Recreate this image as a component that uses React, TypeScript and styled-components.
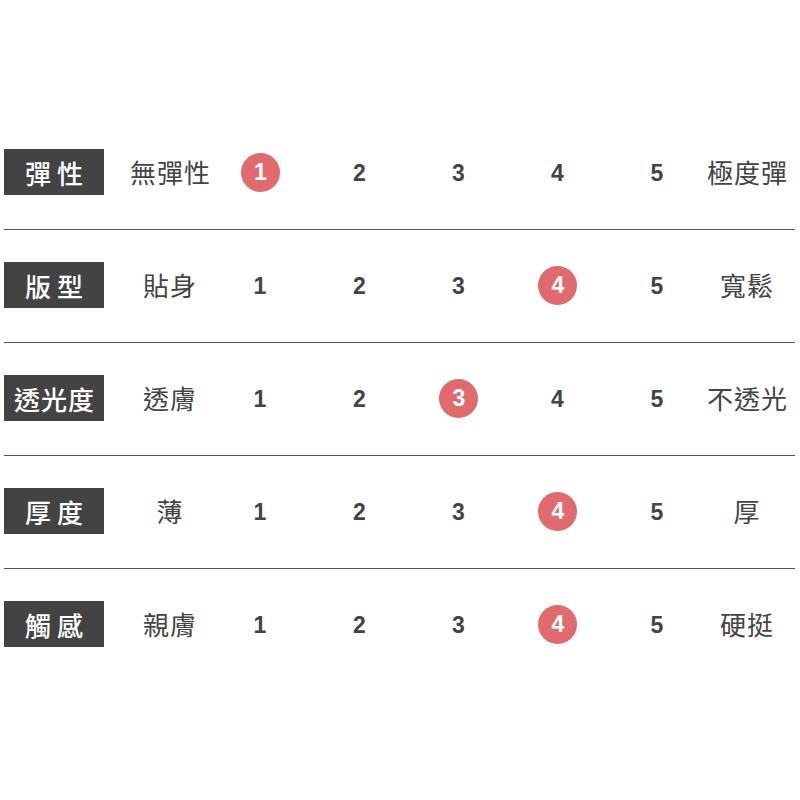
import styled, { createGlobalStyle } from 'styled-components'

const GlobalStyle = createGlobalStyle`
  html, body {
    margin: 0;
    padding: 0;
    background: #ffffff;
  }
  body {
    font-family: "Noto Sans CJK TC", "Noto Sans", sans-serif;
  }
`

type Row = {
  label: string
  low: string
  high: string
  value: number
}

const rows: Row[] = [
  { label: '彈性', low: '無彈性', high: '極度彈', value: 1 },
  { label: '版型', low: '貼身', high: '寬鬆', value: 4 },
  { label: '透光度', low: '透膚', high: '不透光', value: 3 },
  { label: '厚度', low: '薄', high: '厚', value: 4 },
  { label: '觸感', low: '親膚', high: '硬挺', value: 4 },
]

const Page = styled.div`
  width: 800px;
  height: 800px;
  box-sizing: border-box;
  padding: 149px 5px 0 4px;
`

const Table = styled.div`
  display: flex;
  flex-direction: column;
`

const SpecRow = styled.div`
  display: grid;
  grid-template-columns: 100px 106px 100px 99px 99px 99px 100px 80px;
  align-items: center;
  height: 46px;
`

const Label = styled.div<{ $wide?: boolean }>`
  height: 46px;
  background: #434343;
  color: #ffffff;
  display: flex;
  align-items: center;
  justify-content: center;
  font-size: 26px;
  font-weight: 500;
  letter-spacing: ${p => (p.$wide ? '1px' : '6px')};
  text-indent: ${p => (p.$wide ? '1px' : '6px')};
`

const EndText = styled.div<{ $low?: boolean }>`
  color: #444444;
  font-size: 26px;
  letter-spacing: 1px;
  text-align: center;
  padding-left: ${p => (p.$low ? '26px' : '0')};
  white-space: nowrap;
  margin-top: -2px;
`

const Num = styled.div`
  display: flex;
  justify-content: center;
  align-items: center;
  font-family: "Liberation Sans", Arial, sans-serif;
  font-weight: 700;
  font-size: 23px;
  color: #444444;
  padding-top: 2px;
`

const Dot = styled.span`
  width: 39px;
  height: 39px;
  margin-top: -2px;
  border-radius: 50%;
  background: #e06b6e;
  color: #ffffff;
  display: flex;
  align-items: center;
  justify-content: center;
  padding-left: 1px;
  box-sizing: border-box;
`

const Divider = styled.div`
  height: 1px;
  background: #555555;
  margin: 34px 0 32px;
`

export default function App() {
  return (
    <Page>
      <GlobalStyle />
      <Table>
        {rows.map((r, i) => (
          <div key={r.label}>
            <SpecRow>
              <Label $wide={r.label.length > 2}>{r.label}</Label>
              <EndText $low>{r.low}</EndText>
              {[1, 2, 3, 4, 5].map(n => (
                <Num key={n}>{n === r.value ? <Dot>{n}</Dot> : n}</Num>
              ))}
              <EndText>{r.high}</EndText>
            </SpecRow>
            {i < rows.length - 1 && <Divider />}
          </div>
        ))}
      </Table>
    </Page>
  )
}
